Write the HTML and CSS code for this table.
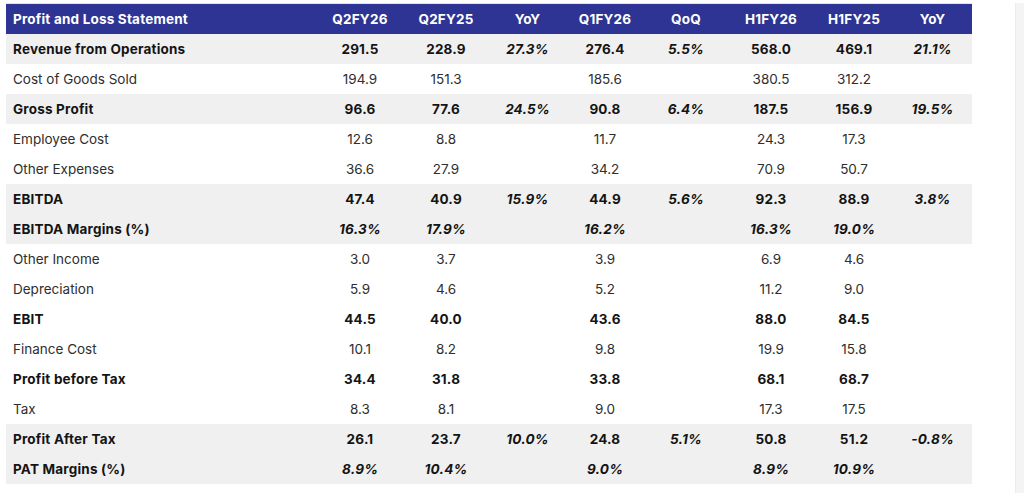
FILE: index.html
```html
<!DOCTYPE html>
<html>
<head>
<meta charset="utf-8">
<link rel="stylesheet" href="styles.css">
</head>
<body>
<div class="page">
  <table class="pl">
    <colgroup>
      <col class="c-label"><col class="c1"><col class="c2"><col class="c3"><col class="c4"><col class="c5"><col class="c6"><col class="c7"><col class="c8">
    </colgroup>
    <thead>
      <tr><th class="label">Profit and Loss Statement</th><th>Q2FY26</th><th>Q2FY25</th><th>YoY</th><th>Q1FY26</th><th>QoQ</th><th>H1FY26</th><th>H1FY25</th><th>YoY</th></tr>
    </thead>
    <tbody>
      <tr class="bold shade"><td class="label">Revenue from Operations</td><td>291.5</td><td>228.9</td><td class="it">27.3%</td><td>276.4</td><td class="it">5.5%</td><td>568.0</td><td>469.1</td><td class="it">21.1%</td></tr>
      <tr><td class="label">Cost of Goods Sold</td><td>194.9</td><td>151.3</td><td></td><td>185.6</td><td></td><td>380.5</td><td>312.2</td><td></td></tr>
      <tr class="bold shade"><td class="label">Gross Profit</td><td>96.6</td><td>77.6</td><td class="it">24.5%</td><td>90.8</td><td class="it">6.4%</td><td>187.5</td><td>156.9</td><td class="it">19.5%</td></tr>
      <tr><td class="label">Employee Cost</td><td>12.6</td><td>8.8</td><td></td><td>11.7</td><td></td><td>24.3</td><td>17.3</td><td></td></tr>
      <tr><td class="label">Other Expenses</td><td>36.6</td><td>27.9</td><td></td><td>34.2</td><td></td><td>70.9</td><td>50.7</td><td></td></tr>
      <tr class="bold shade"><td class="label">EBITDA</td><td>47.4</td><td>40.9</td><td class="it">15.9%</td><td>44.9</td><td class="it">5.6%</td><td>92.3</td><td>88.9</td><td class="it">3.8%</td></tr>
      <tr class="bold shade"><td class="label">EBITDA Margins (%)</td><td class="it">16.3%</td><td class="it">17.9%</td><td></td><td class="it">16.2%</td><td></td><td class="it">16.3%</td><td class="it">19.0%</td><td></td></tr>
      <tr><td class="label">Other Income</td><td>3.0</td><td>3.7</td><td></td><td>3.9</td><td></td><td>6.9</td><td>4.6</td><td></td></tr>
      <tr><td class="label">Depreciation</td><td>5.9</td><td>4.6</td><td></td><td>5.2</td><td></td><td>11.2</td><td>9.0</td><td></td></tr>
      <tr class="bold"><td class="label">EBIT</td><td>44.5</td><td>40.0</td><td></td><td>43.6</td><td></td><td>88.0</td><td>84.5</td><td></td></tr>
      <tr><td class="label">Finance Cost</td><td>10.1</td><td>8.2</td><td></td><td>9.8</td><td></td><td>19.9</td><td>15.8</td><td></td></tr>
      <tr class="bold"><td class="label">Profit before Tax</td><td>34.4</td><td>31.8</td><td></td><td>33.8</td><td></td><td>68.1</td><td>68.7</td><td></td></tr>
      <tr><td class="label">Tax</td><td>8.3</td><td>8.1</td><td></td><td>9.0</td><td></td><td>17.3</td><td>17.5</td><td></td></tr>
      <tr class="bold shade"><td class="label">Profit After Tax</td><td>26.1</td><td>23.7</td><td class="it">10.0%</td><td>24.8</td><td class="it">5.1%</td><td>50.8</td><td>51.2</td><td class="it">-0.8%</td></tr>
      <tr class="bold shade"><td class="label">PAT Margins (%)</td><td class="it">8.9%</td><td class="it">10.4%</td><td></td><td class="it">9.0%</td><td></td><td class="it">8.9%</td><td class="it">10.9%</td><td></td></tr>
    </tbody>
  </table>
  <div class="scrollbar"></div>
</div>
</body>
</html>
```
FILE: styles.css
```css
html, body {
  margin: 0;
  padding: 0;
  background: #ffffff;
}
body {
  font-family: "Inter", "Noto Sans", sans-serif;
  color: #1c1c1c;
  overflow: hidden;
}
.page {
  display: flex;
  height: 493px;
  padding: 3px 0 0 6px;
  box-sizing: border-box;
}
.pl {
  border-collapse: collapse;
  table-layout: fixed;
  width: 966px;
  border-top: 1px solid #dfe3ef;
  align-self: flex-start;
}
.c-label { width: 312px; }
.c1 { width: 84px; }
.c2 { width: 88px; }
.c3 { width: 75px; }
.c4 { width: 80px; }
.c5 { width: 82px; }
.c6 { width: 88px; }
.c7 { width: 78px; }
.c8 { width: 79px; }
.pl th, .pl td {
  height: 30px;
  padding: 0;
  text-align: center;
  font-size: 13.5px;
  line-height: 30px;
  white-space: nowrap;
}
.pl th {
  background: #2e3494;
  color: #ffffff;
  font-weight: 700;
  letter-spacing: 0.2px;
  height: 29px;
}
.pl .label {
  text-align: left;
  padding-left: 7px;
}
.pl td {
  font-weight: 400;
  color: #2e2e2e;
}
.pl tr.bold td {
  font-weight: 700;
  color: #141414;
  letter-spacing: 0.2px;
}
.pl tr.shade td {
  background: #f0f0f0;
}
.pl td.it {
  font-style: italic;
}
.scrollbar {
  margin-left: auto;
  width: 8px;
  height: 100%;
  background: #f4f4f4;
  border-left: 1px solid #ececec;
}
```
